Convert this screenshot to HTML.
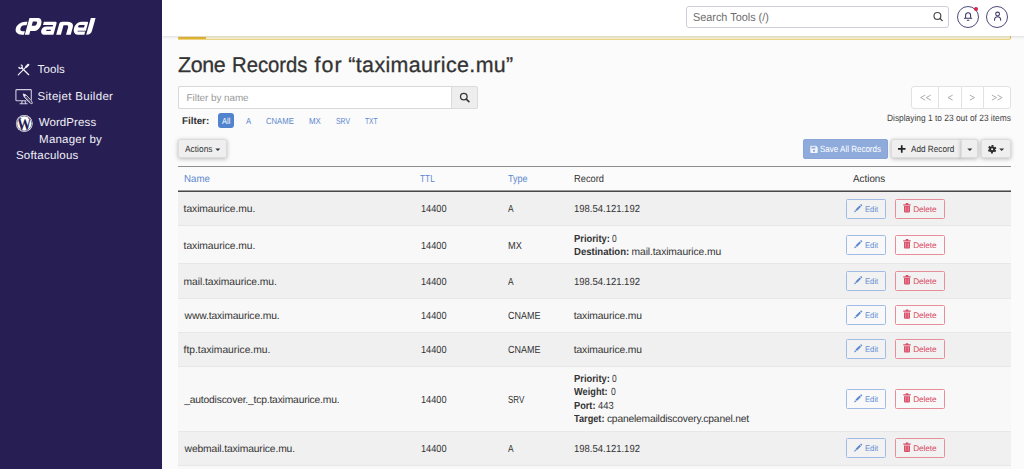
<!DOCTYPE html>
<html>
<head>
<meta charset="utf-8">
<title>Zone Editor</title>
<style>
*{box-sizing:border-box;margin:0;padding:0}
html,body{width:1024px;height:469px;overflow:hidden}
body{font-family:"Liberation Sans",sans-serif;background:#fbfbfb;color:#333;position:relative;text-rendering:geometricPrecision}
#w{position:absolute;left:0;top:0;width:1024px;height:469px}
.a,.t,svg.i{position:absolute}
.t{white-space:pre;line-height:1;color:#333;transform-origin:0 0}
#side{left:-6px;top:-6px;width:168px;height:481px;background:#271f53}
#hdr{left:162px;top:-6px;width:868px;height:42px;background:#fff;box-shadow:0 1px 3px rgba(0,0,0,.13)}
#strip{left:178px;top:36px;width:833px;height:4px;background:#f5f0d3;border-bottom:1px solid #ecd684;border-right:1px solid #e6c34a;border-radius:0 0 2px 0}
#gold{left:178px;top:36.6px;width:28px;height:2.8px;background:#e3b635;border-radius:1.5px 0 0 1.5px}
#search{left:686px;top:6px;width:263px;height:22px;border:1px solid #cdcddc;border-radius:3px;background:#fff}
.circ{width:22px;height:22px;border:1px solid #4f4a79;border-radius:50%;top:5.7px}
#filt{left:178px;top:86px;width:274px;height:23px;border:1px solid #d8d8d8;border-right:0;border-radius:2px 0 0 2px;background:#fff}
#filtbtn{left:451px;top:86px;width:27px;height:23px;border:1px solid #dbdbdb;border-radius:0 2px 2px 0;background:#eee}
#all{left:218px;top:113.2px;width:16px;height:14.8px;background:#5283cd;border-radius:3px}
.btn{border:1px solid #dcdcdc;background:#efefef;border-radius:2px;box-shadow:0 1px 4px rgba(0,0,0,.27);top:139.4px;height:19px}
.pg{top:86px;height:23px;border:1px solid #e2e2e2;background:#fff}
.r{left:178px;width:833px;border-top:1px solid #e7e7e7}
.o{background:#f0f0f0}
.e{background:#f8f8f8}
.ed,.de{height:20px;border-radius:1.5px;background:rgba(255,255,255,.18)}
.ed{left:846.4px;width:39.6px;border:1px solid #a0bce6}
.de{left:895.1px;width:49.7px;border:1px solid #e78e9d}
</style>
</head>
<body>
<div id="w">
<div id="side" class="a"></div>
<div id="strip" class="a"></div>
<div id="gold" class="a"></div>
<div id="hdr" class="a"></div>
<div id="search" class="a"></div>
<div class="a circ" style="left:956.8px"></div>
<div class="a circ" style="left:986.4px"></div>
<div class="a" style="left:973.8px;top:6.5px;width:4.4px;height:4.4px;border-radius:50%;background:#d5254a"></div>
<div id="filt" class="a"></div>
<div id="filtbtn" class="a"></div>
<div id="all" class="a"></div>
<div class="a btn" style="left:178.4px;width:49px"></div>
<div class="a pg" style="left:911px;width:28px;border-radius:3px 0 0 3px"></div>
<div class="a pg" style="left:938px;width:23.5px"></div>
<div class="a pg" style="left:960.5px;width:23.5px"></div>
<div class="a pg" style="left:983px;width:28px;border-radius:0 3px 3px 0"></div>
<div class="a" style="left:803.3px;top:139px;width:84.7px;height:19.7px;background:#8eabdc;border:1px solid #87a5d9;border-radius:2px"></div>
<div class="a btn" style="left:891.4px;width:70.6px;border-radius:2px 0 0 2px"></div>
<div class="a btn" style="left:961.2px;width:17px;border-radius:0 2px 2px 0"></div>
<div class="a btn" style="left:981px;width:29.6px"></div>

<!-- table -->
<div class="a" style="left:178px;top:166px;width:833px;height:1px;background:#8e8e8e"></div>
<div class="a" style="left:178px;top:190px;width:833px;height:1px;background:#9c9c9c"></div>
<div class="a" style="left:178px;top:191px;width:833px;height:1px;background:#484848"></div>
<div class="a r o" style="top:192px;height:33.2px;border-top:0"></div>
<div class="a r e" style="top:225.2px;height:38.1px"></div>
<div class="a r o" style="top:263.3px;height:34.3px"></div>
<div class="a r e" style="top:297.6px;height:34.4px"></div>
<div class="a r o" style="top:332px;height:33.9px"></div>
<div class="a r e" style="top:365.9px;height:65.4px"></div>
<div class="a r o" style="top:431.3px;height:33.9px"></div>
<div class="a r e" style="top:465.2px;height:10px"></div>

<div class="a ed" style="top:199px"></div><div class="a de" style="top:199px"></div>
<div class="a ed" style="top:235px"></div><div class="a de" style="top:235px"></div>
<div class="a ed" style="top:271px"></div><div class="a de" style="top:271px"></div>
<div class="a ed" style="top:305.3px"></div><div class="a de" style="top:305.3px"></div>
<div class="a ed" style="top:339.2px"></div><div class="a de" style="top:339.2px"></div>
<div class="a ed" style="top:389.1px"></div><div class="a de" style="top:389.1px"></div>
<div class="a ed" style="top:438.4px"></div><div class="a de" style="top:438.4px"></div>

<svg class="i" style="left:0;top:0" width="110" height="50" viewBox="0 0 110 50">
<g transform="translate(0,34.7) skewX(-15.5)" fill="none" stroke="#fff" stroke-width="3.5" stroke-linejoin="round">
<path transform="translate(14,0) scale(1.34,1)" d="M7.4,-11.25 H5.75 A4,4.75 0 0 0 1.75,-6.5 A4,4.75 0 0 0 5.75,-1.75 H7.4"/>
<path transform="translate(56.2,0) scale(1.34,1)" d="M1.75,0 V-11.25 H6 A3.1,3.6 0 0 1 9.1,-7.65 V0"/>
<g fill="#fff" stroke="none" fill-rule="evenodd">
<path d="M24.8,0 V-16.8 H33.8 A4.5,6.5 0 0 1 33.8,-3.8 H29.2 V0 Z M29.2,-13.2 H32.6 A1.2,2.1 0 0 1 32.6,-9 H29.2 Z"/>
<path d="M40.3,-13 H51.9 A1.5,1.5 0 0 1 53.4,-11.5 V0 H44.2 A4.1,4.1 0 0 1 44.2,-8.2 H50.4 V-9.7 H40.3 Z M45.6,-4.9 H49.6 V-3.7 H45.6 A.6,.6 0 0 1 45.6,-4.9 Z"/>
<path d="M77.5,-13 H83.4 A1.4,1.4 0 0 1 84.8,-11.6 V-3.9 H76.6 V-3.2 H84.3 V0 H77.5 A5.3,6.5 0 0 1 77.5,-13 Z M77.2,-9.8 H82 V-7.1 H77.2 A1.4,1.35 0 0 1 77.2,-9.8 Z"/>
<path d="M86.2,-16.8 H90.9 V-4 A4.7,4 0 0 1 86.2,0 Z"/>
</g>
</g>
</svg>

<svg class="i" style="left:0;top:0" width="1024" height="469" viewBox="0 0 1024 469">
<defs>
<g id="pen"><path d="M0.3,8.5 L1.2,6.2 L2.6,7.6 Z M1.7,5.7 L5.8,1.6 L7.2,3 L3.1,7.1 Z M6.3,1.1 L6.9,0.5 a.45,.45 0 0 1 .65,0 L8.3,1.25 a.45,.45 0 0 1 0,.65 L7.7,2.5 Z"/></g>
<g id="bin"><path d="M2.4,1.1 V0.5 a.5,.5 0 0 1 .5,-.5 H4.6 a.5,.5 0 0 1 .5,.5 V1.1 H7.4 V2.3 H0 V1.1 Z M0.7,3 H6.7 V8.4 a1,1 0 0 1 -1,1 H1.7 a1,1 0 0 1 -1,-1 Z"/><path d="M2.45,3.6 V8.4 M4.95,3.6 V8.4" stroke="#f3b9c3" stroke-width=".65" fill="none"/></g>
<path id="car" d="M0,0 H5 L2.5,2.5 Z"/>
</defs>
<!-- tools icon -->
<g fill="none" stroke="#f4f2fa" stroke-linecap="round">
<path d="M21.7,67.8 L28.7,74.7" stroke-width="1.25"/>
<path d="M20.75,64.95 A1.75,1.75 0 1 1 18.85,66.85" stroke-width="1.3" stroke-linecap="butt"/>
<path d="M18.2,74.8 L25.9,67.2" stroke-width="1.15"/>
<path d="M26.3,66.8 L28.3,64.8" stroke-width="2.2"/>
</g>
<!-- sitejet icon -->
<g fill="none" stroke="#cfcce0" stroke-width="1.1">
<rect x="15.9" y="89.6" width="15.4" height="11.2" rx="0.8"/>
<path d="M22.2,100.8 L21.6,103.4 M25,100.8 L25.6,103.4 M19.6,103.7 H27.6"/>
</g>
<path d="M23.6,94.6 L30.4,101.9 L31.6,103.6" stroke="#271f53" stroke-width="4.2" fill="none"/>
<path d="M23.2,93.9 L24.2,97 L29.4,102.6 L31.6,103.6 a.6,.6 0 0 0 .7,-.7 L31.4,100.7 L26.2,95.1 Z" fill="#271f53" stroke="#f1eff7" stroke-width=".85" stroke-linejoin="round"/>
<path d="M23.2,93.9 L24.2,97 L26.2,95.1 Z" fill="#f1eff7"/>
<path d="M24.9,96.3 L30.2,102" stroke="#f1eff7" stroke-width=".7" fill="none"/>
<!-- wordpress -->
<clipPath id="wpc"><circle cx="24.3" cy="123.5" r="7.1"/></clipPath>
<circle cx="24.3" cy="123.5" r="8.4" fill="#fff"/>
<circle cx="24.3" cy="123.5" r="7.5" fill="none" stroke="#271f53" stroke-width=".6"/>
<g clip-path="url(#wpc)"><text transform="translate(24.3,129.7) scale(.8,1)" text-anchor="middle" font-family="Liberation Serif" font-weight="700" font-size="18" fill="#271f53">W</text></g>
<!-- header search mag -->
<g fill="none" stroke="#4a4a4a" stroke-width="1.2" stroke-linecap="round">
<circle cx="937.4" cy="15.9" r="3.4"/><path d="M940,18.5 L942.3,20.7"/>
</g>
<!-- bell -->
<g fill="none" stroke="#3b3666" stroke-width="1.05" stroke-linecap="round" stroke-linejoin="round">
<path d="M964.4,18.3 H971.8 M965.6,18.3 V15.5 a2.5,2.7 0 0 1 5,0 V18.3 M967.3,20.2 H968.9"/>
<circle cx="997.6" cy="14" r="1.9"/><path d="M994.5,20.2 a3.1,3.4 0 0 1 6.2,0"/>
</g>
<!-- filter mag -->
<g fill="none" stroke="#383838" stroke-width="1.3" stroke-linecap="round">
<circle cx="463.8" cy="96.6" r="3.3"/><path d="M466.5,99.4 L468.9,101.7" stroke-width="1.7"/>
</g>
<!-- pagination chevrons -->
<g fill="none" stroke="#a9a9a9" stroke-width=".95">
<path d="M925.2,95.1 L920.6,97.6 L925.2,100.1 M930.8,95.1 L926.2,97.6 L930.8,100.1"/>
<path d="M952.7,95.1 L948,97.6 L952.7,100.1"/>
<path d="M969.8,95.1 L974.5,97.6 L969.8,100.1"/>
<path d="M991.9,95.1 L996.5,97.6 L991.9,100.1 M997.5,95.1 L1002.1,97.6 L997.5,100.1"/>
</g>
<!-- carets -->
<use href="#car" x="215.3" y="148.5" fill="#333"/>
<use href="#car" x="967.3" y="148.6" fill="#333"/>
<use href="#car" x="999.2" y="148.6" fill="#333"/>
<!-- plus -->
<path d="M898,148.95 H905.5 M901.75,145.2 V152.7" stroke="#222" stroke-width="1.7" fill="none"/>
<!-- gear -->
<g fill="none" stroke="#2b2b2b">
<circle cx="992.1" cy="149.2" r="2.05" stroke-width="2"/>
<circle cx="992.1" cy="149.2" r="3.45" stroke-width="1.5" stroke-dasharray="1.95 1.663" stroke-dashoffset="2.78"/>
</g>
<!-- floppy -->
<path d="M811,145.8 H816 L817.7,147.5 V152.2 a.7,.7 0 0 1 -.7,.7 H811 a.7,.7 0 0 1 -.7,-.7 V146.5 a.7,.7 0 0 1 .7,-.7 Z" fill="#f2f5fb"/>
<rect x="811.5" y="146.7" width="3.9" height="1.8" fill="#8eabdc"/>
<circle cx="814" cy="150.8" r="1.15" fill="#8eabdc"/>
<!-- row icons -->
<g fill="#5b87cf">
<use href="#pen" x="853.8" y="203.8"/><use href="#pen" x="853.8" y="239.8"/><use href="#pen" x="853.8" y="275.8"/><use href="#pen" x="853.8" y="310.1"/><use href="#pen" x="853.8" y="343.9"/><use href="#pen" x="853.8" y="393.9"/><use href="#pen" x="853.8" y="443.2"/>
</g>
<g fill="#d84f68">
<use href="#bin" x="903.3" y="203.1"/><use href="#bin" x="903.3" y="239.1"/><use href="#bin" x="903.3" y="275.1"/><use href="#bin" x="903.3" y="309.4"/><use href="#bin" x="903.3" y="343.2"/><use href="#bin" x="903.3" y="393.2"/><use href="#bin" x="903.3" y="442.5"/>
</g>
</svg>

<span class="t" style="left:37.50px;top:64.80px;font-size:11.5px;letter-spacing:0.126px;color:#f1eff7;">Tools</span>
<span class="t" style="left:37.50px;top:91.50px;font-size:11.5px;letter-spacing:0.320px;color:#f1eff7;">Sitejet Builder</span>
<span class="t" style="left:38.70px;top:117.80px;font-size:11.5px;letter-spacing:0.098px;color:#f1eff7;">WordPress</span>
<span class="t" style="left:39.10px;top:134.80px;font-size:11.5px;letter-spacing:0.213px;color:#f1eff7;">Manager by</span>
<span class="t" style="left:15.90px;top:150.90px;font-size:11.5px;letter-spacing:0.236px;color:#f1eff7;">Softaculous</span>
<span class="t" style="left:692.70px;top:12.70px;font-size:11.5px;transform:scaleX(0.9442);color:#6d6d6d;">Search Tools (/)</span>
<span class="t" style="left:177.90px;top:54.70px;font-size:21.4px;letter-spacing:-0.320px;-webkit-text-stroke:.3px #333;">Zone</span>
<span class="t" style="left:231.95px;top:54.70px;font-size:21.4px;transform:scaleX(0.9480);-webkit-text-stroke:.3px #333;">Records</span>
<span class="t" style="left:314.50px;top:54.70px;font-size:21.4px;letter-spacing:1.030px;-webkit-text-stroke:.3px #333;">for</span>
<span class="t" style="left:348.30px;top:54.70px;font-size:21.4px;letter-spacing:0.377px;-webkit-text-stroke:.3px #333;">“taximaurice.mu”</span>
<span class="t" style="left:186.60px;top:93.90px;font-size:9.9px;letter-spacing:-0.044px;color:#999;">Filter by name</span>
<span class="t" style="left:182.00px;top:116.90px;font-size:9.9px;letter-spacing:-0.040px;font-weight:700;">Filter:</span>
<span class="t" style="left:221.80px;top:116.90px;font-size:8.8px;transform:scaleX(0.8552);color:#fff;">All</span>
<span class="t" style="left:245.80px;top:116.80px;font-size:8.8px;transform:scaleX(0.8833);color:#5b87cf;">A</span>
<span class="t" style="left:265.70px;top:116.80px;font-size:8.8px;transform:scaleX(0.8746);color:#5b87cf;">CNAME</span>
<span class="t" style="left:308.90px;top:116.80px;font-size:8.8px;transform:scaleX(0.9004);color:#5b87cf;">MX</span>
<span class="t" style="left:335.80px;top:116.80px;font-size:8.8px;transform:scaleX(0.7807);color:#5b87cf;">SRV</span>
<span class="t" style="left:365.10px;top:116.80px;font-size:8.8px;transform:scaleX(0.7540);color:#5b87cf;">TXT</span>
<span class="t" style="left:184.90px;top:144.90px;font-size:9.1px;transform:scaleX(0.9216);">Actions</span>
<span class="t" style="left:886.80px;top:113.80px;font-size:9.1px;transform:scaleX(0.9213);color:#444;">Displaying 1 to 23 out of 23 items</span>
<span class="t" style="left:819.80px;top:145.30px;font-size:9.1px;transform:scaleX(0.8809);color:#fff;">Save All Records</span>
<span class="t" style="left:910.90px;top:144.90px;font-size:9.1px;transform:scaleX(0.9007);">Add Record</span>
<span class="t" style="left:183.70px;top:174.80px;font-size:10.3px;transform:scaleX(0.9445);color:#5b87cf;">Name</span>
<span class="t" style="left:420.30px;top:174.80px;font-size:10.3px;transform:scaleX(0.8073);color:#5b87cf;">TTL</span>
<span class="t" style="left:508.40px;top:174.80px;font-size:10.3px;transform:scaleX(0.8762);color:#5b87cf;">Type</span>
<span class="t" style="left:573.70px;top:174.80px;font-size:10.3px;transform:scaleX(0.9054);">Record</span>
<span class="t" style="left:853.20px;top:174.80px;font-size:10.3px;transform:scaleX(0.9548);">Actions</span>
<span class="t" style="left:183.60px;top:205.30px;font-size:10.3px;letter-spacing:-0.065px;">taximaurice.mu.</span>
<span class="t" style="left:420.70px;top:205.30px;font-size:10.3px;transform:scaleX(0.8925);">14400</span>
<span class="t" style="left:508.00px;top:205.30px;font-size:10.3px;transform:scaleX(0.8143);">A</span>
<span class="t" style="left:864.80px;top:205.60px;font-size:8.2px;transform:scaleX(0.9371);color:#638ed4;">Edit</span>
<span class="t" style="left:913.20px;top:205.60px;font-size:8.2px;letter-spacing:-0.063px;color:#d74a63;">Delete</span>
<span class="t" style="left:183.60px;top:241.50px;font-size:10.3px;letter-spacing:-0.065px;">taximaurice.mu.</span>
<span class="t" style="left:420.70px;top:241.50px;font-size:10.3px;transform:scaleX(0.8925);">14400</span>
<span class="t" style="left:508.00px;top:241.50px;font-size:10.3px;transform:scaleX(0.8923);">MX</span>
<span class="t" style="left:864.80px;top:241.80px;font-size:8.2px;transform:scaleX(0.9371);color:#638ed4;">Edit</span>
<span class="t" style="left:913.20px;top:241.80px;font-size:8.2px;letter-spacing:-0.063px;color:#d74a63;">Delete</span>
<span class="t" style="left:183.60px;top:277.70px;font-size:10.3px;letter-spacing:-0.061px;">mail.taximaurice.mu.</span>
<span class="t" style="left:420.70px;top:277.70px;font-size:10.3px;transform:scaleX(0.8925);">14400</span>
<span class="t" style="left:508.00px;top:277.70px;font-size:10.3px;transform:scaleX(0.8143);">A</span>
<span class="t" style="left:864.80px;top:278.00px;font-size:8.2px;transform:scaleX(0.9371);color:#638ed4;">Edit</span>
<span class="t" style="left:913.20px;top:278.00px;font-size:8.2px;letter-spacing:-0.063px;color:#d74a63;">Delete</span>
<span class="t" style="left:184.60px;top:311.70px;font-size:10.3px;letter-spacing:-0.123px;">www.taximaurice.mu.</span>
<span class="t" style="left:420.70px;top:311.70px;font-size:10.3px;transform:scaleX(0.8925);">14400</span>
<span class="t" style="left:508.00px;top:311.70px;font-size:10.3px;transform:scaleX(0.8709);">CNAME</span>
<span class="t" style="left:864.80px;top:312.00px;font-size:8.2px;transform:scaleX(0.9371);color:#638ed4;">Edit</span>
<span class="t" style="left:913.20px;top:312.00px;font-size:8.2px;letter-spacing:-0.063px;color:#d74a63;">Delete</span>
<span class="t" style="left:183.60px;top:345.70px;font-size:10.3px;letter-spacing:-0.012px;">ftp.taximaurice.mu.</span>
<span class="t" style="left:420.70px;top:345.70px;font-size:10.3px;transform:scaleX(0.8925);">14400</span>
<span class="t" style="left:508.00px;top:345.70px;font-size:10.3px;transform:scaleX(0.8709);">CNAME</span>
<span class="t" style="left:864.80px;top:346.00px;font-size:8.2px;transform:scaleX(0.9371);color:#638ed4;">Edit</span>
<span class="t" style="left:913.20px;top:346.00px;font-size:8.2px;letter-spacing:-0.063px;color:#d74a63;">Delete</span>
<span class="t" style="left:184.20px;top:395.60px;font-size:10.3px;letter-spacing:-0.183px;">_autodiscover._tcp.taximaurice.mu.</span>
<span class="t" style="left:420.70px;top:395.60px;font-size:10.3px;transform:scaleX(0.8925);">14400</span>
<span class="t" style="left:508.00px;top:395.60px;font-size:10.3px;transform:scaleX(0.7766);">SRV</span>
<span class="t" style="left:864.80px;top:395.90px;font-size:8.2px;transform:scaleX(0.9371);color:#638ed4;">Edit</span>
<span class="t" style="left:913.20px;top:395.90px;font-size:8.2px;letter-spacing:-0.063px;color:#d74a63;">Delete</span>
<span class="t" style="left:184.60px;top:445.10px;font-size:10.3px;letter-spacing:-0.129px;">webmail.taximaurice.mu.</span>
<span class="t" style="left:420.70px;top:445.10px;font-size:10.3px;transform:scaleX(0.8925);">14400</span>
<span class="t" style="left:508.00px;top:445.10px;font-size:10.3px;transform:scaleX(0.8143);">A</span>
<span class="t" style="left:864.80px;top:445.40px;font-size:8.2px;transform:scaleX(0.9371);color:#638ed4;">Edit</span>
<span class="t" style="left:913.20px;top:445.40px;font-size:8.2px;letter-spacing:-0.063px;color:#d74a63;">Delete</span>
<span class="t" style="left:574.00px;top:205.30px;font-size:10.3px;transform:scaleX(0.9214);">198.54.121.192</span>
<span class="t" style="left:574.00px;top:277.70px;font-size:10.3px;transform:scaleX(0.9214);">198.54.121.192</span>
<span class="t" style="left:574.00px;top:445.10px;font-size:10.3px;transform:scaleX(0.9214);">198.54.121.192</span>
<span class="t" style="left:573.80px;top:311.70px;font-size:10.3px;letter-spacing:-0.130px;">taximaurice.mu</span>
<span class="t" style="left:573.80px;top:345.70px;font-size:10.3px;letter-spacing:-0.130px;">taximaurice.mu</span>
<span class="t" style="left:574.00px;top:234.70px;font-size:10.3px;transform:scaleX(0.9091);font-weight:700;">Priority:</span>
<span class="t" style="left:612.30px;top:234.70px;font-size:10.3px;transform:scaleX(0.8167);">0</span>
<span class="t" style="left:574.00px;top:247.80px;font-size:10.3px;transform:scaleX(0.9278);font-weight:700;">Destination:</span>
<span class="t" style="left:631.60px;top:247.80px;font-size:10.3px;letter-spacing:-0.112px;">mail.taximaurice.mu</span>
<span class="t" style="left:574.00px;top:374.90px;font-size:10.3px;transform:scaleX(0.9091);font-weight:700;">Priority:</span>
<span class="t" style="left:612.30px;top:374.90px;font-size:10.3px;transform:scaleX(0.8167);">0</span>
<span class="t" style="left:574.00px;top:388.30px;font-size:10.3px;transform:scaleX(0.8969);font-weight:700;">Weight:</span>
<span class="t" style="left:610.50px;top:388.30px;font-size:10.3px;transform:scaleX(0.8333);">0</span>
<span class="t" style="left:574.00px;top:401.70px;font-size:10.3px;transform:scaleX(0.8943);font-weight:700;">Port:</span>
<span class="t" style="left:597.90px;top:401.70px;font-size:10.3px;transform:scaleX(0.9110);">443</span>
<span class="t" style="left:574.00px;top:415.10px;font-size:10.3px;transform:scaleX(0.8931);font-weight:700;">Target:</span>
<span class="t" style="left:606.90px;top:415.10px;font-size:10.3px;letter-spacing:-0.193px;">cpanelemaildiscovery.cpanel.net</span>
</div>
</body>
</html>
